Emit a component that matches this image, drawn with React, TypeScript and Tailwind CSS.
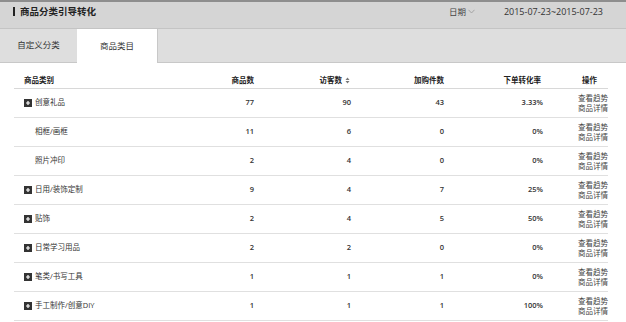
import React from 'react';

type Row = {
  name: string;
  sub?: boolean;
  goods: string;
  visitors: string;
  cart: string;
  rate: string;
};

const rows: Row[] = [
  { name: '创意礼品', goods: '77', visitors: '90', cart: '43', rate: '3.33%' },
  { name: '相框/画框', sub: true, goods: '11', visitors: '6', cart: '0', rate: '0%' },
  { name: '照片冲印', sub: true, goods: '2', visitors: '4', cart: '0', rate: '0%' },
  { name: '日用/装饰定制', goods: '9', visitors: '4', cart: '7', rate: '25%' },
  { name: '贴饰', goods: '2', visitors: '4', cart: '5', rate: '50%' },
  { name: '日常学习用品', goods: '2', visitors: '2', cart: '0', rate: '0%' },
  { name: '笔类/书写工具', goods: '1', visitors: '1', cart: '1', rate: '0%' },
  { name: '手工制作/创意DIY', goods: '1', visitors: '1', cart: '1', rate: '100%' },
];

const font = { fontFamily: '"Open Sans", "Noto Sans CJK SC", sans-serif' };

const PlusBox = () => (
  <span className="inline-flex items-center justify-center w-[8px] h-[8px] bg-[#333] mr-[3px]">
    <svg width="6" height="6" viewBox="0 0 6 6">
      <path d="M3 1v4M1 3h4" stroke="#fff" strokeWidth="1.2" />
    </svg>
  </span>
);

const SortIcon = () => (
  <svg width="5" height="7" viewBox="0 0 5 7" className="ml-[3px]">
    <path d="M2.5 0.5L4.5 3H0.5z" fill="#777" />
    <path d="M2.5 6.5L4.5 4H0.5z" fill="#777" />
  </svg>
);

const cols = 'grid grid-cols-[186px_54px_97px_93px_99px_65px]';

export default function App() {
  return (
    <div className="w-[626px] h-[322px] bg-white overflow-hidden text-[#333]" style={font}>
      <div className="h-[29px] bg-[#d5d5d5] border-t-2 border-[#8e8e8e] border-b border-b-[#c4c4c4] flex items-start pt-[2px] pl-[13px] pr-[23px]">
        <span className="w-[2px] h-[9px] bg-[#222] mr-[5px] mt-[3px]" />
        <span className="text-[9.5px] font-bold text-[#222] leading-[15px]">商品分类引导转化</span>
        <span className="ml-auto pl-[4px] text-[8.5px] text-[#444] flex items-center leading-[15px]">
          日期
          <svg width="7" height="5" viewBox="0 0 7 5" className="ml-[2px]">
            <path d="M0.5 0.8L3.5 4L6.5 0.8" stroke="#999" fill="none" strokeWidth="0.8" />
          </svg>
        </span>
        <span className="ml-[29px] text-[9px] text-[#333] leading-[15px]">2015-07-23~2015-07-23</span>
      </div>

      <div className="h-[34px] flex bg-[#dedede]">
        <div className="w-[77px] flex items-center justify-center text-[8.5px] text-[#333] border-b border-[#c8c8c8]">
          自定义分类
        </div>
        <div className="w-[80px] bg-white flex items-center justify-center text-[8.5px] text-[#333]">
          商品类目
        </div>
        <div className="flex-1 border-l border-b border-[#c8c8c8]" />
      </div>

      <div className="mx-[14px] w-[594px]">
        <div className={`${cols} h-[26px] items-end pb-[4px] leading-none border-b border-[#d8d8d8] text-[7.5px] font-bold text-[#222]`}>
          <div className="pl-[10px]">商品类别</div>
          <div className="text-right">商品数</div>
          <div className="flex items-center justify-end pr-[1px]">
            访客数
            <SortIcon />
          </div>
          <div className="text-right">加购件数</div>
          <div className="text-right pr-[2px]">下单转化率</div>
          <div className="text-right pr-[11px]">操作</div>
        </div>
        {rows.map((r) => (
          <div
            key={r.name}
            className={`${cols} h-[29px] items-center border-b border-[#e0e0e0] text-[7.5px] text-[#333]`}
          >
            <div className={`flex items-center ${r.sub ? 'pl-[21px]' : 'pl-[10px]'}`}>
              {!r.sub && <PlusBox />}
              <span>{r.name}</span>
            </div>
            <div className="text-right font-semibold">{r.goods}</div>
            <div className="text-right font-semibold">{r.visitors}</div>
            <div className="text-right font-semibold">{r.cart}</div>
            <div className="text-right font-semibold">{r.rate}</div>
            <div className="flex flex-col items-end leading-[10px] text-[#444]">
              <span>查看趋势</span>
              <span>商品详情</span>
            </div>
          </div>
        ))}
      </div>
    </div>
  );
}
